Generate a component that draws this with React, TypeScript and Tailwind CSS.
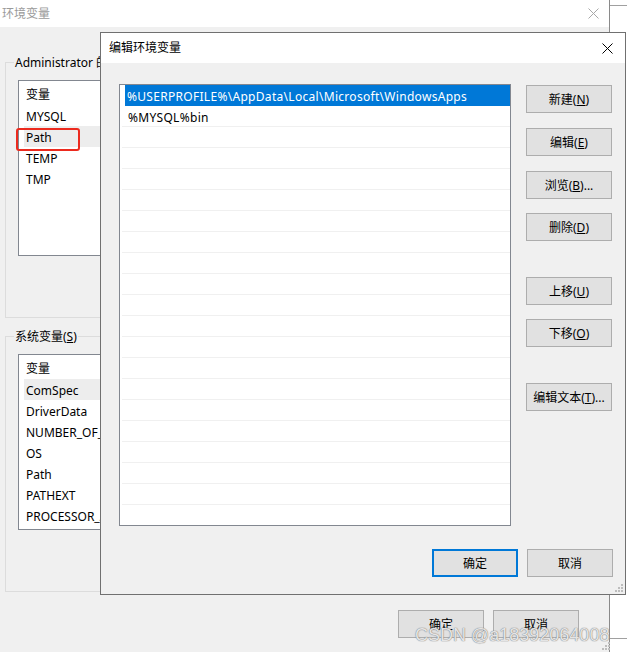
import { ReactNode } from "react";

const U = ({ c }: { c: string }) => <span className="underline underline-offset-[1px]">{c}</span>;

const Btn = ({ children, primary = false, className = "" }: { children: ReactNode; primary?: boolean; className?: string }) => (
  <div
    className={
      "flex h-[28px] w-[86px] shrink-0 items-center justify-center bg-[#e1e1e1] pt-[2px] text-[12px] text-black " +
      (primary ? "border-2 border-[#0078d7] " : "border border-[#adadad] ") +
      className
    }
  >
    {children}
  </div>
);

const Grip = () => (
  <svg width="8" height="8" viewBox="0 0 8 8">
    {[
      [6, 0],
      [3, 3],
      [6, 3],
      [0, 6],
      [3, 6],
      [6, 6],
    ].map(([x, y]) => (
      <rect key={`${x}-${y}`} x={x} y={y} width="2" height="2" fill="#bdbdbd" />
    ))}
  </svg>
);

const Cross = ({ color }: { color: string }) => (
  <svg width="11" height="11" viewBox="0 0 11 11">
    <path d="M0.5 0.5 L10.5 10.5 M10.5 0.5 L0.5 10.5" stroke={color} strokeWidth="1" />
  </svg>
);

const VarList = ({ items, hover }: { items: string[]; hover: string }) => (
  <div className="h-[176px] w-[560px] border border-[#828790] bg-white pl-[5px]">
    <div className="flex h-[24px] items-center pl-[2px] pt-[4px]">变量</div>
    {items.map((it) => (
      <div key={it} className={"flex h-[21px] items-center pl-[2px] pt-[2px] " + (it === hover ? "bg-[#ededed]" : "")}>
        {it}
      </div>
    ))}
  </div>
);

const Group = ({ label, children, className = "" }: { label: ReactNode; children: ReactNode; className?: string }) => (
  <div className={"relative h-[256px] w-[597px] border border-[#dcdcdc] pl-[12px] pt-[17px] " + className}>
    <span className="absolute -top-[8px] left-[8px] bg-[#f0f0f0] px-[1px] leading-[16px]">{label}</span>
    {children}
  </div>
);

const paths = ["%USERPROFILE%\\AppData\\Local\\Microsoft\\WindowsApps", "%MYSQL%bin"];

export default function App() {
  return (
    <div className="relative flex h-[652px] w-[627px] overflow-hidden bg-white font-['Noto_Sans','Noto_Sans_CJK_SC',sans-serif] text-[12px] text-black">
      {/* background window */}
      <div className="flex h-full w-[610px] shrink-0 flex-col border-r border-[#8a8a8a] bg-[#f0f0f0]">
        <div className="flex h-[27px] shrink-0 items-center justify-between bg-white pl-[2px] pr-[10px] text-[#9a9a9a]">
          <span>环境变量</span>
          <Cross color="#a8a8a8" />
        </div>
        <div className="flex flex-col pl-[5px]">
          <Group className="mt-[35px]" label={<>Administrator 的用户变量(<U c="U" />)</>}>
            <VarList items={["MYSQL", "Path", "TEMP", "TMP"]} hover="Path" />
          </Group>
          <Group className="mt-[18px]" label={<>系统变量(<U c="S" />)</>}>
            <VarList
              items={["ComSpec", "DriverData", "NUMBER_OF_PROCESSORS", "OS", "Path", "PATHEXT", "PROCESSOR_ARCHITECTURE"]}
              hover="ComSpec"
            />
          </Group>
          <div className="mt-[18px] flex justify-end gap-[9px] pr-[30px]">
            <Btn>确定</Btn>
            <Btn>取消</Btn>
          </div>
        </div>
      </div>
      {/* strip to the right of the background window */}
      <div className="flex flex-1 flex-col">
        <div className="mt-[5px] h-[634px] border-y border-[#a0a0a0]" />
      </div>

      {/* annotation */}
      <div className="absolute left-[16px] top-[128px] h-[23px] w-[64px] rounded-[3px] border-2 border-[#ec2a1e]" />

      <div className="absolute bottom-[2px] left-[602px]">
        <Grip />
      </div>

      {/* edit dialog */}
      <div className="absolute left-[100px] top-[32px] flex h-[563px] w-[526px] flex-col border border-[#707070] bg-[#f0f0f0]">
        <div className="flex h-[30px] shrink-0 items-center justify-between bg-white pl-[8px] pr-[12px]">
          <span>编辑环境变量</span>
          <Cross color="#000" />
        </div>
        <div className="flex flex-col pl-[18px] pr-[12px] pt-[21px]">
          <div className="flex gap-[15px]">
            <div className="h-[442px] w-[392px] overflow-hidden border border-[#828790] bg-white pl-[1px]">
              {Array.from({ length: 21 }).map((_, i) => (
                <div
                  key={i}
                  className={
                    "flex h-[21px] items-center border-b pt-[3px] tracking-[0.3px] " +
                    (i === 0 ? "ml-[4px] border-[#0078d7] bg-[#0078d7] pl-[2px] text-white" : "ml-[1px] border-[#f0f0f0] pl-[6px]")
                  }
                >
                  {paths[i] ?? ""}
                </div>
              ))}
            </div>
            <div className="flex flex-col pt-[1px]">
              <Btn>
                新建(<U c="N" />)
              </Btn>
              <Btn className="mt-[15px]">
                编辑(<U c="E" />)
              </Btn>
              <Btn className="mt-[15px]">
                浏览(<U c="B" />)...
              </Btn>
              <Btn className="mt-[14px]">
                删除(<U c="D" />)
              </Btn>
              <Btn className="mt-[36px]">
                上移(<U c="U" />)
              </Btn>
              <Btn className="mt-[14px]">
                下移(<U c="O" />)
              </Btn>
              <Btn className="mt-[36px]">
                编辑文本(<U c="T" />)...
              </Btn>
            </div>
          </div>
          <div className="mt-[23px] flex justify-end gap-[9px]">
            <Btn primary>确定</Btn>
            <Btn>取消</Btn>
          </div>
        </div>
        <div className="absolute bottom-[2px] right-[2px]">
          <Grip />
        </div>
      </div>

      {/* watermark */}
      <div className="absolute left-[415px] top-[626px] font-['Liberation_Sans',sans-serif] text-[18px] leading-[18px] text-white/80 [text-shadow:0_0_1px_#7a7a7a,0_0_1px_#7a7a7a]">
        CSDN @a18392064008
      </div>
    </div>
  );
}
